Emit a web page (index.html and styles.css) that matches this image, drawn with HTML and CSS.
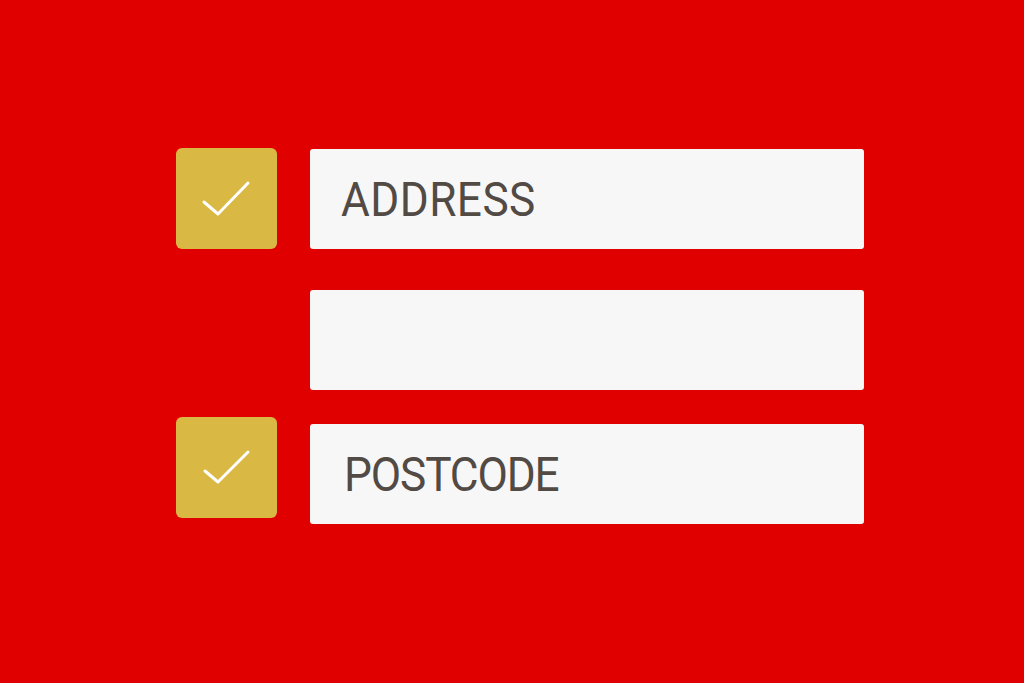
FILE: index.html
```html
<!DOCTYPE html>
<html>
<head>
<meta charset="utf-8">
<link rel="stylesheet" href="styles.css">
</head>
<body>
<div class="form">
  <div class="row row-first">
    <div class="check">
      <svg viewBox="0 0 100 100" width="100" height="100"><path d="M28 54 L42 66 L72 35" fill="none" stroke="#ffffff" stroke-width="3" stroke-linecap="round" stroke-linejoin="round"/></svg>
    </div>
    <div class="field field-first"><span class="label">ADDRESS</span></div>
  </div>
  <div class="row row-second">
    <div class="spacer"></div>
    <div class="field"></div>
  </div>
  <div class="row row-third">
    <div class="check">
      <svg viewBox="0 0 100 100" width="100" height="100"><path d="M29 54 L42 65 L72 35" fill="none" stroke="#ffffff" stroke-width="3" stroke-linecap="round" stroke-linejoin="round"/></svg>
    </div>
    <div class="field field-third"><span class="label label-post">POSTCODE</span></div>
  </div>
</div>
</body>
</html>
```
FILE: styles.css
```css
html, body {
  margin: 0;
  padding: 0;
  background: #e00000;
  width: 1024px;
  height: 683px;
  overflow: hidden;
}
.form {
  display: flex;
  flex-direction: column;
  padding: 148px 0 0 176px;
}
.row {
  display: flex;
  align-items: flex-start;
  gap: 33px;
}
.row-second { margin-top: 41px; }
.row-third { margin-top: 27px; }
.check {
  width: 101px;
  height: 101px;
  background: #d9b943;
  border-radius: 6px;
  flex: none;
}
.check svg { display: block; }
.spacer { width: 101px; flex: none; }
.field {
  width: 554px;
  height: 100px;
  background: #f8f7f7;
  border-radius: 3px;
  display: flex;
  align-items: center;
  padding-left: 31px;
  box-sizing: border-box;
}
.field-first { margin-top: 1px; }
.field-third { margin-top: 7px; }
.label {
  display: inline-block;
  font-family: Roboto, "Liberation Sans", sans-serif;
  font-size: 48px;
  color: #524a44;
  letter-spacing: 0.5px;
  line-height: 1;
  padding-top: 2px;
  transform: scaleX(0.92);
  transform-origin: left center;
}
.label-post {
  letter-spacing: -1.2px;
  margin-left: 3px;
}
```
